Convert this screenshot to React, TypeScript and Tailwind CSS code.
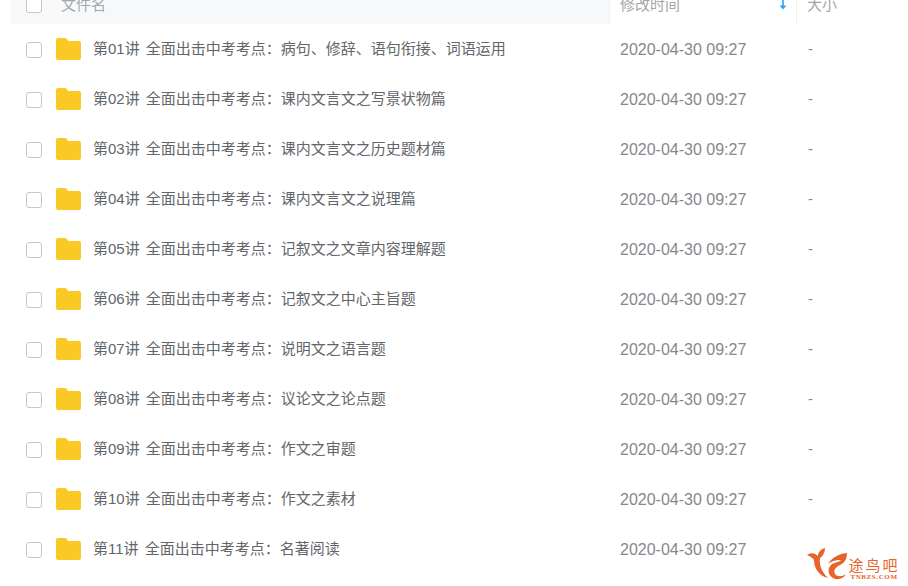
const names = [
  "第01讲 全面出击中考考点:病句、修辞、语句衔接、词语运用",
  "第02讲 全面出击中考考点:课内文言文之写景状物篇",
  "第03讲 全面出击中考考点:课内文言文之历史题材篇",
  "第04讲 全面出击中考考点:课内文言文之说理篇",
  "第05讲 全面出击中考考点:记叙文之文章内容理解题",
  "第06讲 全面出击中考考点:记叙文之中心主旨题",
  "第07讲 全面出击中考考点:说明文之语言题",
  "第08讲 全面出击中考考点:议论文之论点题",
  "第09讲 全面出击中考考点:作文之审题",
  "第10讲 全面出击中考考点:作文之素材",
  "第11讲 全面出击中考考点:名著阅读",
].map((s) => s.replace(":", "\uFF1A"));

function Folder() {
  return (
    <svg width="25" height="22" viewBox="0 0 25 22" className="shrink-0 block">
      <path d="M0 2a2 2 0 0 1 2-2h7a2 2 0 0 1 1.6.8L12 3h11a2 2 0 0 1 2 2v15a2 2 0 0 1-2 2H2a2 2 0 0 1-2-2z" fill="#fbc926" />
    </svg>
  );
}

function Box() {
  return <span className="block w-4 h-4 shrink-0 rounded-[3px] border border-[#c4c6c9] bg-white" />;
}

function Logo() {
  return (
    <div className="absolute right-[9px] bottom-[4px] flex items-end">
      <svg width="42" height="35" viewBox="0 0 42 35">
        <path d="M0 8 C4 5 8 6 11 9 C11 5 14 2 18 1 C18 5 16 9 13 11 C12 17 14 24 21 31 C12 29 7 21 7 13 C6 11 3 9 0 8Z" fill="#e8622c" />
        <path d="M40 6 C34 6 25 10 21 17 C26 13 31 13 34 13 C31 16 27 15 24 18 C20 22 21 28 26 31 C31 34 37 31 39 27 C35 30 30 30 28 27 C26 23 29 20 33 18 C38 16 40 11 40 6Z" fill="#e8622c" />
      </svg>
      <div className="flex w-[50px] flex-col items-center pb-[1px] text-[#e8622c] font-['Noto_Sans_CJK_SC',sans-serif]">
        <span className="text-[15px] leading-[16px] tracking-[2px] whitespace-nowrap">途鸟吧</span>
        <span className="text-[7px] leading-[8px] font-bold tracking-[0.6px] whitespace-nowrap font-['Liberation_Serif',serif]">TNBZS.COM</span>
      </div>
    </div>
  );
}

export default function App() {
  return (
    <div className="relative w-[908px] h-[586px] overflow-hidden bg-white font-['Liberation_Sans','Noto_Sans_CJK_SC',sans-serif] text-[15px]">
      <div className="ml-[10px]">
        <div className="flex h-[24px] overflow-hidden bg-[#f7f8fa] text-[#a3a6ab]">
          <div className="flex h-[10px] flex-1 items-center pl-[16px]">
            <Box />
            <span className="ml-[19px]">文件名</span>
          </div>
          <div className="relative w-[188px] shrink-0 border-x border-[#eef0f2] bg-white pl-[10px]">
            <span className="flex h-[10px] items-center">修改时间</span>
            <svg width="10" height="10" viewBox="0 0 10 10" className="absolute right-[8px] top-0">
              <path d="M5 0v6" stroke="#2ea1f8" strokeWidth="1.6" />
              <path d="M1.5 5.5h7L5 9.5z" fill="#2ea1f8" />
            </svg>
          </div>
          <div className="w-[111px] shrink-0 bg-white pl-[10px]">
            <span className="flex h-[10px] items-center">大小</span>
          </div>
        </div>
        {names.map((n, i) => (
          <div key={n} className="flex h-[50px] items-center pt-[1px]">
            <div className="flex flex-1 items-center pl-[16px]">
              <Box />
              <span className="ml-[14px] mb-[2px]"><Folder /></span>
              <span className="ml-[12px] text-[#62666b] [word-spacing:2px]">{n}</span>
            </div>
            <div className="w-[188px] shrink-0 pl-[11px] text-[#85888c] text-[16px]">2020-04-30 09:27</div>
            <div className="w-[111px] shrink-0 pl-[11px] text-[#85888c]">{i < 10 ? "-" : ""}</div>
          </div>
        ))}
      </div>
      <Logo />
    </div>
  );
}
